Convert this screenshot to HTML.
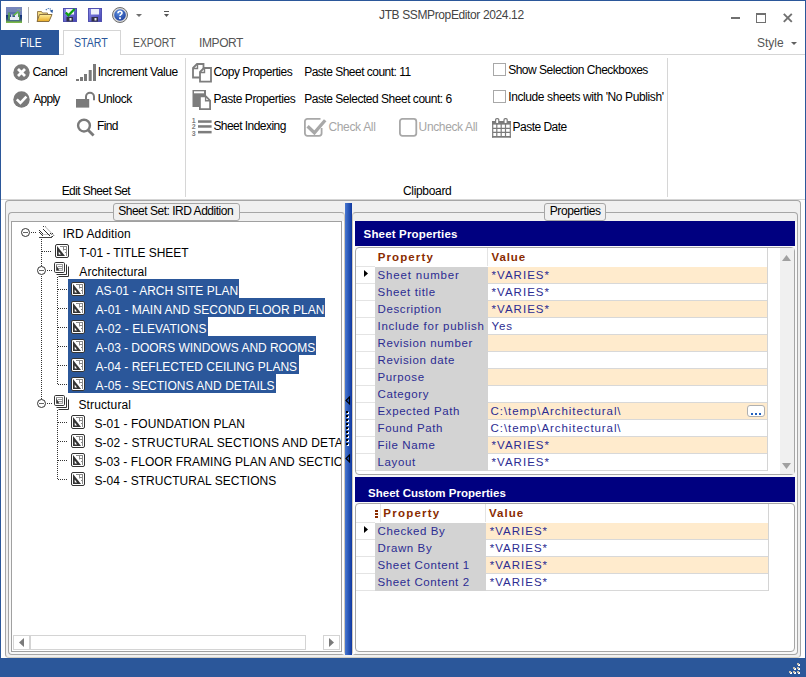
<!DOCTYPE html>
<html><head><meta charset="utf-8">
<style>
*{margin:0;padding:0;box-sizing:border-box}
html,body{width:806px;height:677px;overflow:hidden;background:#fff}
body{position:relative;font-family:"Liberation Sans",sans-serif;color:#000}
.a{position:absolute}
.t{position:absolute;white-space:pre;line-height:20px;font-size:12px}
svg{position:absolute;overflow:visible}
.hl{position:absolute;background:#2b579a;height:19px}
.row{position:absolute;height:16px}
</style></head><body>
<!-- window border -->
<div class="a" style="left:0;top:0;width:806px;height:1px;background:#2b579a"></div>
<div class="a" style="left:0;top:0;width:1px;height:677px;background:#2b579a"></div>
<div class="a" style="left:805px;top:0;width:1px;height:677px;background:#2b579a"></div>

<!-- quick access toolbar -->
<svg style="left:6px;top:7px" width="16" height="16" viewBox="0 0 16 16">
  <defs><linearGradient id="gapp" x1="0" y1="0" x2="0" y2="1">
    <stop offset="0" stop-color="#7888bb"/><stop offset="0.48" stop-color="#6f80b6"/><stop offset="0.52" stop-color="#12307a"/><stop offset="0.75" stop-color="#2a4a7a"/><stop offset="1" stop-color="#86c840"/></linearGradient></defs>
  <rect x="0" y="0" width="16" height="16" fill="url(#gapp)"/>
  <rect x="2.5" y="5" width="11" height="9" fill="#4a62a0" opacity="0.6"/>
  <path d="M3 5.5v7M13 5.5v7" stroke="#5cb040" stroke-width="1.4"/>
  <path d="M4 10h9v3H4z" fill="#e8ecf6"/>
  <path d="M9 10V8l3-2v4z" fill="#e8ecf6"/>
  <rect x="5" y="7.5" width="1.5" height="2.5" fill="#c8d0e8"/>
  <path d="M7.5 8.5L12.5 4.5" stroke="#68c040" stroke-width="1.6"/>
  <path d="M11.5 2.5q2-0.5 3.5 1.5" stroke="#90c080" stroke-width="0.9" fill="none" stroke-dasharray="1 0.6"/>
</svg>
<div class="a" style="left:28px;top:7px;width:1px;height:16px;background:#b0b0b0"></div>
<svg style="left:37px;top:8px" width="16" height="14" viewBox="0 0 16 14">
  <defs><linearGradient id="gfold" x1="0" y1="0" x2="0" y2="1"><stop offset="0" stop-color="#fff0a0"/><stop offset="1" stop-color="#e8a820"/></linearGradient></defs>
  <path d="M0.5 3.5h4l1 1.5h5v8h-10z" fill="#f6dc80" stroke="#9a8050" stroke-width="1"/>
  <path d="M2.5 6.5h12.5l-3 7h-12z" fill="url(#gfold)" stroke="#8a7040" stroke-width="1"/>
  <path d="M8.8 2.2Q11.5 -1 14.6 2" fill="none" stroke="#4070b0" stroke-width="1.1" stroke-dasharray="1.3 0.9"/>
  <path d="M12.6 2.6l3.4-0.8-0.6 3.4z" fill="#2858a0"/>
</svg>
<svg style="left:63px;top:8px" width="14" height="14" viewBox="0 0 14 14">
  <defs><linearGradient id="gflop" x1="0" y1="0" x2="1" y2="1"><stop offset="0" stop-color="#8a8ae8"/><stop offset="1" stop-color="#4444b4"/></linearGradient></defs>
  <rect x="0.5" y="0.5" width="13" height="13" fill="url(#gflop)" stroke="#5050b0"/>
  <rect x="3" y="1" width="8" height="5.5" fill="#eef0fa"/>
  <rect x="3.5" y="9" width="6.5" height="4.5" fill="#303048"/>
  <rect x="6.5" y="10" width="2" height="2.5" fill="#e8e8e8"/>
  <path d="M2.8 4.5l2.6 2.8 6.2-6.3" fill="none" stroke="#10a010" stroke-width="2.2"/>
</svg>
<svg style="left:88px;top:8px" width="14" height="14" viewBox="0 0 14 14">
  <rect x="0.5" y="0.5" width="13" height="13" fill="url(#gflop)" stroke="#5050b0"/>
  <rect x="3" y="1" width="8" height="5.5" fill="#eef0fa"/>
  <rect x="3.5" y="9" width="6.5" height="4.5" fill="#303048"/>
  <rect x="6.5" y="10" width="2" height="2.5" fill="#e8e8e8"/>
</svg>
<svg style="left:112px;top:7px" width="16" height="16" viewBox="0 0 16 16">
  <defs><radialGradient id="ghelp" cx="0.4" cy="0.3" r="0.8"><stop offset="0" stop-color="#5a8ee0"/><stop offset="1" stop-color="#1a3a98"/></radialGradient></defs>
  <circle cx="8" cy="8" r="7.5" fill="#d8d8d8" stroke="#707070" stroke-width="1"/>
  <circle cx="8" cy="8" r="5.8" fill="url(#ghelp)"/>
  <path d="M6 6.2q0-2 2-2t2 1.8q0 1-1.2 1.6q-0.8 0.4-0.8 1.4" fill="none" stroke="#fff" stroke-width="1.6"/>
  <rect x="7.1" y="10.3" width="1.8" height="1.8" fill="#fff"/>
</svg>
<svg style="left:136px;top:14px" width="6" height="3" viewBox="0 0 6 3"><path d="M0 0h6l-3 3z" fill="#707070"/></svg>
<svg style="left:164px;top:10px" width="5" height="8" viewBox="0 0 5 8"><rect x="0" y="1" width="5" height="1" fill="#555"/><path d="M0 4h5l-2.5 3z" fill="#555"/></svg>

<!-- window controls -->
<div class="a" style="left:731px;top:17px;width:9px;height:2px;background:#707070"></div>
<div class="a" style="left:756px;top:13px;width:10px;height:10px;border:1px solid #707070;border-top-width:2px"></div>
<svg style="left:783px;top:13px" width="10" height="10" viewBox="0 0 10 10"><path d="M0.8 0.8L8.8 8.8M8.8 0.8L0.8 8.8" stroke="#707070" stroke-width="1.9"/></svg>

<!-- tabs -->
<div class="a" style="left:1px;top:54px;width:804px;height:1px;background:#d5d5d5"></div>
<div class="a" style="left:0;top:30px;width:59px;height:25px;background:#2b579a"></div>
<div class="a" style="left:63px;top:30px;width:58px;height:25px;border:1px solid #d5d5d5;border-bottom:none;background:#fff"></div>
<svg style="left:791px;top:42px" width="6" height="3" viewBox="0 0 6 3"><path d="M0 0h6l-3 3z" fill="#606060"/></svg>

<!-- ribbon -->
<div class="a" style="left:185px;top:58px;width:1px;height:139px;background:#d6d6d6"></div>
<div class="a" style="left:667px;top:58px;width:1px;height:139px;background:#d6d6d6"></div>
<div class="a" style="left:1px;top:199px;width:804px;height:1px;background:#d5d5d5"></div>

<!-- Cancel -->
<svg style="left:13px;top:64px" width="17" height="17" viewBox="0 0 17 17">
  <circle cx="8.5" cy="8.5" r="8.2" fill="#7a7a7a"/>
  <path d="M5 5l7 7M12 5l-7 7" stroke="#fff" stroke-width="2.8"/>
</svg>
<!-- Apply -->
<svg style="left:13px;top:91px" width="17" height="17" viewBox="0 0 17 17">
  <circle cx="8.5" cy="8.5" r="8.2" fill="#7a7a7a"/>
  <path d="M3.8 8.4l3.6 3.6 6-6.4" fill="none" stroke="#fff" stroke-width="2.6"/>
</svg>
<!-- Increment -->
<svg style="left:76px;top:64px" width="21" height="17" viewBox="0 0 21 17">
  <rect x="0" y="15" width="3" height="2" fill="#7a7a7a"/>
  <rect x="4" y="13" width="3" height="4" fill="#7a7a7a"/>
  <rect x="8" y="10" width="3" height="7" fill="#7a7a7a"/>
  <rect x="12.7" y="6" width="3" height="11" fill="#7a7a7a"/>
  <rect x="17" y="0" width="3" height="17" fill="#7a7a7a"/>
</svg>
<!-- Unlock -->
<svg style="left:76px;top:92px" width="20" height="16" viewBox="0 0 20 16">
  <rect x="0" y="7" width="13.2" height="8.6" fill="#7a7a7a"/>
  <path d="M10 8V4.8a4 4 0 0 1 8 0V8.3" fill="none" stroke="#7a7a7a" stroke-width="2"/>
</svg>
<!-- Find -->
<svg style="left:76px;top:118px" width="19" height="19" viewBox="0 0 19 19">
  <circle cx="8" cy="7.6" r="5.9" fill="none" stroke="#7a7a7a" stroke-width="2.4"/>
  <path d="M11.8 11.8l5.8 5.8" stroke="#7a7a7a" stroke-width="2.8"/>
</svg>
<!-- Copy props -->
<svg style="left:192px;top:63px" width="20" height="20" viewBox="0 0 20 20">
  <path d="M1 5l4-4h6.5v13.5H1z" fill="#fff" stroke="#7d7d7d" stroke-width="1.8"/>
  <path d="M1 5.5h4.5V1" fill="none" stroke="#7d7d7d" stroke-width="1.4"/>
  <path d="M8 9l4-4h7v13.7H8z" fill="#fff" stroke="#7d7d7d" stroke-width="1.8"/>
  <path d="M8 9.5h4.5V5" fill="none" stroke="#7d7d7d" stroke-width="1.4"/>
</svg>
<!-- Paste props -->
<svg style="left:192px;top:90px" width="20" height="20" viewBox="0 0 20 20">
  <rect x="0.5" y="0" width="13.5" height="17" fill="#7d7d7d"/>
  <rect x="2" y="1.3" width="10" height="2" fill="#fff"/>
  <path d="M7.9 6.4h6l4.2 4.2v8.5H7.9z" fill="#fff" stroke="#7d7d7d" stroke-width="1.8"/>
  <path d="M13.6 6v4.7h4.7" fill="none" stroke="#7d7d7d" stroke-width="1.4"/>
</svg>
<!-- Sheet indexing -->
<svg style="left:192px;top:117px" width="20" height="20" viewBox="0 0 20 20">
  <text x="-0.2" y="5.6" font-family="Liberation Sans" font-size="7" font-weight="700" fill="#7d7d7d">1</text>
  <text x="-0.2" y="12" font-family="Liberation Sans" font-size="7" font-weight="700" fill="#7d7d7d">2</text>
  <text x="-0.2" y="19" font-family="Liberation Sans" font-size="7" font-weight="700" fill="#7d7d7d">3</text>
  <rect x="6" y="3.3" width="13.6" height="2.5" fill="#7d7d7d"/>
  <rect x="6" y="8.2" width="13.6" height="2.5" fill="#7d7d7d"/>
  <rect x="6" y="13.9" width="13.6" height="2.5" fill="#7d7d7d"/>
</svg>
<!-- Check all -->
<svg style="left:304px;top:118px" width="23" height="19" viewBox="0 0 23 19">
  <path d="M16.5 0.9H3.4a2.5 2.5 0 0 0-2.5 2.5v11.9a2.5 2.5 0 0 0 2.5 2.5h11.7a2.5 2.5 0 0 0 2.5-2.5V10" fill="none" stroke="#a8a8a8" stroke-width="1.8"/>
  <path d="M3.6 8.2l6.8 6.6 10.8-12.6" fill="none" stroke="#a8a8a8" stroke-width="3.3"/>
</svg>
<!-- Uncheck all -->
<svg style="left:399px;top:118px" width="18" height="19" viewBox="0 0 18 19">
  <rect x="0.9" y="0.9" width="16.4" height="16.9" rx="2.5" fill="none" stroke="#a8a8a8" stroke-width="1.8"/>
</svg>
<!-- checkboxes -->
<div class="a" style="left:493px;top:63px;width:13px;height:13px;border:1px solid #a8a8a8;background:#fff"></div>
<div class="a" style="left:493px;top:90px;width:13px;height:13px;border:1px solid #a8a8a8;background:#fff"></div>
<!-- calendar -->
<svg style="left:492px;top:118px" width="19" height="20" viewBox="0 0 19 20">
  <rect x="0.5" y="3" width="18" height="16.6" fill="#fff"/>
  <rect x="0" y="3" width="19" height="3.6" fill="#7a7a7a"/>
  <rect x="0" y="18" width="19" height="1.7" fill="#7a7a7a"/>
  <path d="M0.7 3v16.6M18.3 3v16.6M1 10.4h17M1 14.4h17M4.8 6v12M9.2 6v12M13.5 6v12" stroke="#7a7a7a" stroke-width="1.2"/>
  <rect x="3.6" y="0.6" width="3.2" height="5" rx="1.2" fill="#fff" stroke="#7a7a7a" stroke-width="1.2"/>
  <rect x="12" y="0.6" width="3.2" height="5" rx="1.2" fill="#fff" stroke="#7a7a7a" stroke-width="1.2"/>
</svg>

<!-- main panel -->
<div class="a" style="left:5px;top:200px;width:796px;height:458px;border:1px solid #a6a6a6;border-bottom-color:#d4cfc4;border-radius:4px;background:#f0f0f0"></div>
<!-- left group -->
<div class="a" style="left:8px;top:212px;width:337px;height:443px;border:1px solid #a6a6a6;border-right-color:#cfc8bc;border-radius:4px;background:linear-gradient(180deg,#f0f0f0 0 9px,#f8f8f8 9px)"></div>
<div class="a" style="left:342px;top:221px;width:2px;height:433px;background:#fff"></div>
<div class="a" style="left:113px;top:203px;width:127px;height:18px;border:1px solid #a6a6a6;border-radius:3px;background:#f0f0f0"></div>
<!-- tree -->
<div class="a" style="left:11px;top:221px;width:331px;height:431px;border:1px solid #a0a0a0;background:#fff"></div>
<div class="a" id="tree" style="left:0;top:0;width:341px;height:651px;overflow:hidden">
<div class="hl" style="left:68px;top:279px;width:171px"></div>
<div class="hl" style="left:68px;top:298px;width:257px"></div>
<div class="hl" style="left:68px;top:317px;width:140px"></div>
<div class="hl" style="left:68px;top:336px;width:248px"></div>
<div class="hl" style="left:68px;top:355px;width:231px"></div>
<div class="hl" style="left:68px;top:374px;width:208px"></div>
<svg style="left:21px;top:228px" width="9" height="9" viewBox="0 0 9 9">
<circle cx="4.5" cy="4.5" r="4" fill="#fff" stroke="#333" stroke-width="1"/>
<path d="M2 4.5h5" stroke="#666" stroke-width="1"/></svg>
<div class="a" style="left:31px;top:232px;width:5px;height:1px;background:repeating-linear-gradient(90deg,#333 0 1px,transparent 1px 2px)"></div>
<svg style="left:38px;top:225px" width="16" height="14" viewBox="0 0 16 14" shape-rendering="crispEdges"><rect x="3" y="9" width="9" height="1" fill="#c8c8c8"/><rect x="7" y="2" width="1" height="1" fill="#d8d8d8"/><rect x="8" y="2" width="1" height="1" fill="#d8d8d8"/><rect x="8" y="3" width="1" height="1" fill="#d8d8d8"/><rect x="9" y="3" width="1" height="1" fill="#d8d8d8"/><rect x="9" y="4" width="1" height="1" fill="#d8d8d8"/><rect x="10" y="4" width="1" height="1" fill="#d8d8d8"/><rect x="10" y="5" width="1" height="1" fill="#d8d8d8"/><rect x="11" y="5" width="1" height="1" fill="#d8d8d8"/><rect x="11" y="6" width="1" height="1" fill="#d8d8d8"/><rect x="12" y="6" width="1" height="1" fill="#d8d8d8"/><rect x="12" y="7" width="1" height="1" fill="#d8d8d8"/><rect x="13" y="7" width="1" height="1" fill="#d8d8d8"/><rect x="13" y="8" width="1" height="1" fill="#d8d8d8"/><rect x="14" y="8" width="1" height="1" fill="#d8d8d8"/><rect x="14" y="9" width="1" height="1" fill="#d8d8d8"/><rect x="15" y="9" width="1" height="1" fill="#d8d8d8"/><rect x="15" y="10" width="1" height="1" fill="#d8d8d8"/><rect x="16" y="10" width="1" height="1" fill="#d8d8d8"/><rect x="7" y="1" width="1" height="1" fill="#909090"/><rect x="13" y="9" width="1" height="1" fill="#909090"/><rect x="13" y="11" width="1" height="1" fill="#909090"/><rect x="15" y="10" width="1" height="1" fill="#909090"/><rect x="5" y="1" width="1" height="1" fill="#333"/><rect x="5" y="4" width="1" height="1" fill="#333"/><rect x="6" y="5" width="1" height="1" fill="#333"/><rect x="7" y="6" width="1" height="1" fill="#333"/><rect x="8" y="7" width="1" height="1" fill="#333"/><rect x="9" y="8" width="1" height="1" fill="#333"/><rect x="10" y="9" width="1" height="1" fill="#333"/><rect x="11" y="10" width="1" height="1" fill="#333"/><rect x="1" y="5" width="1" height="1" fill="#333"/><rect x="1" y="7" width="1" height="1" fill="#333"/><rect x="2" y="6" width="1" height="1" fill="#333"/><rect x="3" y="7" width="1" height="1" fill="#333"/><rect x="2" y="8" width="1" height="1" fill="#333"/><rect x="3" y="9" width="1" height="1" fill="#333"/><rect x="4" y="8" width="1" height="1" fill="#333"/><rect x="4" y="10" width="1" height="1" fill="#333"/><rect x="12" y="8" width="1" height="1" fill="#333"/><rect x="14" y="8" width="1" height="1" fill="#333"/><rect x="14" y="11" width="1" height="1" fill="#333"/><rect x="1" y="12" width="13" height="1" fill="#444"/></svg>
<div class="a" style="left:41px;top:239px;width:1px;height:27px;background:repeating-linear-gradient(180deg,#333 0 1px,transparent 1px 2px)"></div>
<div class="a" style="left:41px;top:276px;width:1px;height:123px;background:repeating-linear-gradient(180deg,#333 0 1px,transparent 1px 2px)"></div>
<div class="a" style="left:42px;top:251px;width:10px;height:1px;background:repeating-linear-gradient(90deg,#333 0 1px,transparent 1px 2px)"></div>
<svg style="left:55px;top:244px" width="14" height="14" viewBox="0 0 14 14">
<rect x="0.5" y="0.5" width="13" height="13" rx="1.5" fill="#fff" stroke="#333" stroke-width="1"/>
<path d="M2 2v10h8z" fill="#333"/><path d="M3.7 7.5v3h2.3z" fill="#fff"/>
<path d="M5 2.5h7M11.5 2.5v9.5M8.5 2.5v4M8 5.5h3.5M10 8.5h1.5" stroke="#8a8a8a" stroke-width="1" fill="none"/>
</svg>
<svg style="left:37px;top:266px" width="9" height="9" viewBox="0 0 9 9">
<circle cx="4.5" cy="4.5" r="4" fill="#fff" stroke="#333" stroke-width="1"/>
<path d="M2 4.5h5" stroke="#666" stroke-width="1"/></svg>
<div class="a" style="left:47px;top:270px;width:5px;height:1px;background:repeating-linear-gradient(90deg,#333 0 1px,transparent 1px 2px)"></div>
<svg style="left:54px;top:262px" width="15" height="15" viewBox="0 0 15 15">
<path d="M12.5 2.5V12.5H2.5M14.5 4.5V14.5H4.5" fill="none" stroke="#333" stroke-width="1"/>
<rect x="0.5" y="0.5" width="10" height="10" rx="1.2" fill="#fff" stroke="#333" stroke-width="1"/>
<rect x="2.5" y="2.5" width="6" height="5.8" fill="#fff" stroke="#9a9a9a" stroke-width="1"/>
<path d="M4 4.5h4.5M4 6.5h4.5" stroke="#9a9a9a" stroke-width="1"/>
<path d="M2.3 3v5.5h3z" fill="#333"/>
</svg>
<div class="a" style="left:58px;top:289px;width:10px;height:1px;background:repeating-linear-gradient(90deg,#333 0 1px,transparent 1px 2px)"></div>
<svg style="left:71px;top:282px" width="14" height="14" viewBox="0 0 14 14">
<rect x="0.5" y="0.5" width="13" height="13" rx="1.5" fill="#fff" stroke="#333" stroke-width="1"/>
<path d="M2 2v10h8z" fill="#333"/><path d="M3.7 7.5v3h2.3z" fill="#fff"/>
<path d="M5 2.5h7M11.5 2.5v9.5M8.5 2.5v4M8 5.5h3.5M10 8.5h1.5" stroke="#8a8a8a" stroke-width="1" fill="none"/>
</svg>
<div class="a" style="left:58px;top:308px;width:10px;height:1px;background:repeating-linear-gradient(90deg,#333 0 1px,transparent 1px 2px)"></div>
<svg style="left:71px;top:301px" width="14" height="14" viewBox="0 0 14 14">
<rect x="0.5" y="0.5" width="13" height="13" rx="1.5" fill="#fff" stroke="#333" stroke-width="1"/>
<path d="M2 2v10h8z" fill="#333"/><path d="M3.7 7.5v3h2.3z" fill="#fff"/>
<path d="M5 2.5h7M11.5 2.5v9.5M8.5 2.5v4M8 5.5h3.5M10 8.5h1.5" stroke="#8a8a8a" stroke-width="1" fill="none"/>
</svg>
<div class="a" style="left:58px;top:327px;width:10px;height:1px;background:repeating-linear-gradient(90deg,#333 0 1px,transparent 1px 2px)"></div>
<svg style="left:71px;top:320px" width="14" height="14" viewBox="0 0 14 14">
<rect x="0.5" y="0.5" width="13" height="13" rx="1.5" fill="#fff" stroke="#333" stroke-width="1"/>
<path d="M2 2v10h8z" fill="#333"/><path d="M3.7 7.5v3h2.3z" fill="#fff"/>
<path d="M5 2.5h7M11.5 2.5v9.5M8.5 2.5v4M8 5.5h3.5M10 8.5h1.5" stroke="#8a8a8a" stroke-width="1" fill="none"/>
</svg>
<div class="a" style="left:58px;top:346px;width:10px;height:1px;background:repeating-linear-gradient(90deg,#333 0 1px,transparent 1px 2px)"></div>
<svg style="left:71px;top:339px" width="14" height="14" viewBox="0 0 14 14">
<rect x="0.5" y="0.5" width="13" height="13" rx="1.5" fill="#fff" stroke="#333" stroke-width="1"/>
<path d="M2 2v10h8z" fill="#333"/><path d="M3.7 7.5v3h2.3z" fill="#fff"/>
<path d="M5 2.5h7M11.5 2.5v9.5M8.5 2.5v4M8 5.5h3.5M10 8.5h1.5" stroke="#8a8a8a" stroke-width="1" fill="none"/>
</svg>
<div class="a" style="left:58px;top:365px;width:10px;height:1px;background:repeating-linear-gradient(90deg,#333 0 1px,transparent 1px 2px)"></div>
<svg style="left:71px;top:358px" width="14" height="14" viewBox="0 0 14 14">
<rect x="0.5" y="0.5" width="13" height="13" rx="1.5" fill="#fff" stroke="#333" stroke-width="1"/>
<path d="M2 2v10h8z" fill="#333"/><path d="M3.7 7.5v3h2.3z" fill="#fff"/>
<path d="M5 2.5h7M11.5 2.5v9.5M8.5 2.5v4M8 5.5h3.5M10 8.5h1.5" stroke="#8a8a8a" stroke-width="1" fill="none"/>
</svg>
<div class="a" style="left:58px;top:384px;width:10px;height:1px;background:repeating-linear-gradient(90deg,#333 0 1px,transparent 1px 2px)"></div>
<svg style="left:71px;top:377px" width="14" height="14" viewBox="0 0 14 14">
<rect x="0.5" y="0.5" width="13" height="13" rx="1.5" fill="#fff" stroke="#333" stroke-width="1"/>
<path d="M2 2v10h8z" fill="#333"/><path d="M3.7 7.5v3h2.3z" fill="#fff"/>
<path d="M5 2.5h7M11.5 2.5v9.5M8.5 2.5v4M8 5.5h3.5M10 8.5h1.5" stroke="#8a8a8a" stroke-width="1" fill="none"/>
</svg>
<svg style="left:37px;top:399px" width="9" height="9" viewBox="0 0 9 9">
<circle cx="4.5" cy="4.5" r="4" fill="#fff" stroke="#333" stroke-width="1"/>
<path d="M2 4.5h5" stroke="#666" stroke-width="1"/></svg>
<div class="a" style="left:47px;top:403px;width:5px;height:1px;background:repeating-linear-gradient(90deg,#333 0 1px,transparent 1px 2px)"></div>
<svg style="left:54px;top:395px" width="15" height="15" viewBox="0 0 15 15">
<path d="M12.5 2.5V12.5H2.5M14.5 4.5V14.5H4.5" fill="none" stroke="#333" stroke-width="1"/>
<rect x="0.5" y="0.5" width="10" height="10" rx="1.2" fill="#fff" stroke="#333" stroke-width="1"/>
<rect x="2.5" y="2.5" width="6" height="5.8" fill="#fff" stroke="#9a9a9a" stroke-width="1"/>
<path d="M4 4.5h4.5M4 6.5h4.5" stroke="#9a9a9a" stroke-width="1"/>
<path d="M2.3 3v5.5h3z" fill="#333"/>
</svg>
<div class="a" style="left:58px;top:422px;width:10px;height:1px;background:repeating-linear-gradient(90deg,#333 0 1px,transparent 1px 2px)"></div>
<svg style="left:71px;top:415px" width="14" height="14" viewBox="0 0 14 14">
<rect x="0.5" y="0.5" width="13" height="13" rx="1.5" fill="#fff" stroke="#333" stroke-width="1"/>
<path d="M2 2v10h8z" fill="#333"/><path d="M3.7 7.5v3h2.3z" fill="#fff"/>
<path d="M5 2.5h7M11.5 2.5v9.5M8.5 2.5v4M8 5.5h3.5M10 8.5h1.5" stroke="#8a8a8a" stroke-width="1" fill="none"/>
</svg>
<div class="a" style="left:58px;top:441px;width:10px;height:1px;background:repeating-linear-gradient(90deg,#333 0 1px,transparent 1px 2px)"></div>
<svg style="left:71px;top:434px" width="14" height="14" viewBox="0 0 14 14">
<rect x="0.5" y="0.5" width="13" height="13" rx="1.5" fill="#fff" stroke="#333" stroke-width="1"/>
<path d="M2 2v10h8z" fill="#333"/><path d="M3.7 7.5v3h2.3z" fill="#fff"/>
<path d="M5 2.5h7M11.5 2.5v9.5M8.5 2.5v4M8 5.5h3.5M10 8.5h1.5" stroke="#8a8a8a" stroke-width="1" fill="none"/>
</svg>
<div class="a" style="left:58px;top:460px;width:10px;height:1px;background:repeating-linear-gradient(90deg,#333 0 1px,transparent 1px 2px)"></div>
<svg style="left:71px;top:453px" width="14" height="14" viewBox="0 0 14 14">
<rect x="0.5" y="0.5" width="13" height="13" rx="1.5" fill="#fff" stroke="#333" stroke-width="1"/>
<path d="M2 2v10h8z" fill="#333"/><path d="M3.7 7.5v3h2.3z" fill="#fff"/>
<path d="M5 2.5h7M11.5 2.5v9.5M8.5 2.5v4M8 5.5h3.5M10 8.5h1.5" stroke="#8a8a8a" stroke-width="1" fill="none"/>
</svg>
<div class="a" style="left:58px;top:479px;width:10px;height:1px;background:repeating-linear-gradient(90deg,#333 0 1px,transparent 1px 2px)"></div>
<svg style="left:71px;top:472px" width="14" height="14" viewBox="0 0 14 14">
<rect x="0.5" y="0.5" width="13" height="13" rx="1.5" fill="#fff" stroke="#333" stroke-width="1"/>
<path d="M2 2v10h8z" fill="#333"/><path d="M3.7 7.5v3h2.3z" fill="#fff"/>
<path d="M5 2.5h7M11.5 2.5v9.5M8.5 2.5v4M8 5.5h3.5M10 8.5h1.5" stroke="#8a8a8a" stroke-width="1" fill="none"/>
</svg>
<div class="a" style="left:57px;top:277px;width:1px;height:108px;background:repeating-linear-gradient(180deg,#333 0 1px,transparent 1px 2px)"></div>
<div class="a" style="left:57px;top:410px;width:1px;height:70px;background:repeating-linear-gradient(180deg,#333 0 1px,transparent 1px 2px)"></div>
<div class="t" style="left:62.70px;top:224.00px;font-size:12px;font-weight:400;color:#000;letter-spacing:0.118px;">IRD Addition</div>
<div class="t" style="left:79.30px;top:243.00px;font-size:12px;font-weight:400;color:#000;letter-spacing:-0.076px;">T-01 - TITLE SHEET</div>
<div class="t" style="left:79.30px;top:262.00px;font-size:12px;font-weight:400;color:#000;letter-spacing:0.083px;">Architectural</div>
<div class="t" style="left:95.60px;top:281.00px;font-size:12px;font-weight:400;color:#fff;letter-spacing:0.024px;">AS-01 - ARCH SITE PLAN</div>
<div class="t" style="left:95.60px;top:300.00px;font-size:12px;font-weight:400;color:#fff;letter-spacing:0.022px;">A-01 - MAIN AND SECOND FLOOR PLAN</div>
<div class="t" style="left:95.60px;top:319.00px;font-size:12px;font-weight:400;color:#fff;letter-spacing:0.075px;">A-02 - ELEVATIONS</div>
<div class="t" style="left:95.60px;top:338.00px;font-size:12px;font-weight:400;color:#fff;letter-spacing:-0.038px;">A-03 - DOORS WINDOWS AND ROOMS</div>
<div class="t" style="left:95.60px;top:357.00px;font-size:12px;font-weight:400;color:#fff;letter-spacing:0.003px;">A-04 - REFLECTED CEILING PLANS</div>
<div class="t" style="left:95.60px;top:376.00px;font-size:12px;font-weight:400;color:#fff;letter-spacing:0.042px;">A-05 - SECTIONS AND DETAILS</div>
<div class="t" style="left:78.40px;top:395.00px;font-size:12px;font-weight:400;color:#000;letter-spacing:0.144px;">Structural</div>
<div class="t" style="left:94.40px;top:414.00px;font-size:12px;font-weight:400;color:#000;letter-spacing:0.071px;">S-01 - FOUNDATION PLAN</div>
<div class="t" style="left:94.40px;top:433.00px;font-size:12px;font-weight:400;color:#000;letter-spacing:0.150px;">S-02 - STRUCTURAL SECTIONS AND DETAILS</div>
<div class="t" style="left:94.40px;top:452.00px;font-size:12px;font-weight:400;color:#000;letter-spacing:0.060px;">S-03 - FLOOR FRAMING PLAN AND SECTIONS</div>
<div class="t" style="left:94.40px;top:471.00px;font-size:12px;font-weight:400;color:#000;letter-spacing:0.040px;">S-04 - STRUCTURAL SECTIONS</div>
</div>
<!-- hscroll -->
<div class="a" style="left:13px;top:635px;width:17px;height:15px;border:1px solid #d4d4d4"></div>
<svg style="left:19px;top:638px" width="5" height="9" viewBox="0 0 5 9"><path d="M5 0v9L0 4.5z" fill="#7a7a7a"/></svg>
<div class="a" style="left:30px;top:635px;width:276px;height:15px;border:1px solid #d4d4d4"></div>
<div class="a" style="left:323px;top:635px;width:17px;height:15px;border:1px solid #d4d4d4"></div>
<svg style="left:329px;top:638px" width="5" height="9" viewBox="0 0 5 9"><path d="M0 0v9l5-4.5z" fill="#7a7a7a"/></svg>

<!-- splitter -->
<div class="a" style="left:345px;top:203px;width:7px;height:452px;background:linear-gradient(90deg,#4a78d0,#2a58b8 50%,#1038a0)"></div>
<svg style="left:345px;top:396px" width="6" height="9" viewBox="0 0 6 9"><path d="M4.5 1L1 4.5 4.5 8z" fill="#1a48b0" stroke="#000" stroke-width="1.1" stroke-linejoin="miter"/></svg>
<svg style="left:345px;top:454px" width="6" height="9" viewBox="0 0 6 9"><path d="M4.5 1L1 4.5 4.5 8z" fill="#1a48b0" stroke="#000" stroke-width="1.1" stroke-linejoin="miter"/></svg>
<div class="a" style="left:347px;top:412px;width:2px;height:34px;background:repeating-linear-gradient(180deg,#fff 0 2px,transparent 2px 4px)"></div>
<div class="a" style="left:346px;top:411px;width:2px;height:34px;background:repeating-linear-gradient(180deg,#000 0 2px,transparent 2px 4px)"></div>

<!-- right group -->
<div class="a" style="left:352px;top:212px;width:446px;height:443px;border:1px solid #a6a6a6;border-left-color:#cfc8bc;border-radius:4px;background:linear-gradient(180deg,#f0f0f0 0 9px,#f8f8f8 9px)"></div>
<div class="a" style="left:353px;top:221px;width:2px;height:433px;background:#fff"></div>
<div class="a" style="left:544px;top:203px;width:62px;height:18px;border:1px solid #a6a6a6;border-radius:3px;background:#f0f0f0"></div>
<div class="a" style="left:355px;top:221px;width:440px;height:25px;background:#000080"></div>
<div class="a" style="left:355px;top:477px;width:440px;height:25px;background:#000080"></div>
<!-- grid1 -->
<div class="a" style="left:355px;top:247px;width:440px;height:228px;border:1px solid #a6a6a6;border-radius:4px;background:#fff"></div>
<div class="a" style="left:356px;top:266px;width:19px;height:1px;background:#e4e4e4"></div>
<div class="a" style="left:487px;top:248px;width:1px;height:18px;background:#e4e4e4"></div>
<div class="a" style="left:375px;top:267px;width:113px;height:17px;background:#d3d3d3"></div>
<div class="a" style="left:488px;top:267px;width:279px;height:16px;background:#ffebcd"></div>
<div class="a" style="left:356px;top:283px;width:19px;height:1px;background:#e4e4e4"></div>
<div class="a" style="left:488px;top:283px;width:279px;height:1px;background:#d8d8d8"></div>
<div class="a" style="left:375px;top:284px;width:113px;height:17px;background:#d3d3d3"></div>
<div class="a" style="left:488px;top:284px;width:279px;height:16px;background:#fff"></div>
<div class="a" style="left:356px;top:300px;width:19px;height:1px;background:#e4e4e4"></div>
<div class="a" style="left:488px;top:300px;width:279px;height:1px;background:#d8d8d8"></div>
<div class="a" style="left:375px;top:301px;width:113px;height:17px;background:#d3d3d3"></div>
<div class="a" style="left:488px;top:301px;width:279px;height:16px;background:#ffebcd"></div>
<div class="a" style="left:356px;top:317px;width:19px;height:1px;background:#e4e4e4"></div>
<div class="a" style="left:488px;top:317px;width:279px;height:1px;background:#d8d8d8"></div>
<div class="a" style="left:375px;top:318px;width:113px;height:17px;background:#d3d3d3"></div>
<div class="a" style="left:488px;top:318px;width:279px;height:16px;background:#fff"></div>
<div class="a" style="left:356px;top:334px;width:19px;height:1px;background:#e4e4e4"></div>
<div class="a" style="left:488px;top:334px;width:279px;height:1px;background:#d8d8d8"></div>
<div class="a" style="left:375px;top:335px;width:113px;height:17px;background:#d3d3d3"></div>
<div class="a" style="left:488px;top:335px;width:279px;height:16px;background:#ffebcd"></div>
<div class="a" style="left:356px;top:351px;width:19px;height:1px;background:#e4e4e4"></div>
<div class="a" style="left:488px;top:351px;width:279px;height:1px;background:#d8d8d8"></div>
<div class="a" style="left:375px;top:352px;width:113px;height:17px;background:#d3d3d3"></div>
<div class="a" style="left:488px;top:352px;width:279px;height:16px;background:#fff"></div>
<div class="a" style="left:356px;top:368px;width:19px;height:1px;background:#e4e4e4"></div>
<div class="a" style="left:488px;top:368px;width:279px;height:1px;background:#d8d8d8"></div>
<div class="a" style="left:375px;top:369px;width:113px;height:17px;background:#d3d3d3"></div>
<div class="a" style="left:488px;top:369px;width:279px;height:16px;background:#ffebcd"></div>
<div class="a" style="left:356px;top:385px;width:19px;height:1px;background:#e4e4e4"></div>
<div class="a" style="left:488px;top:385px;width:279px;height:1px;background:#d8d8d8"></div>
<div class="a" style="left:375px;top:386px;width:113px;height:17px;background:#d3d3d3"></div>
<div class="a" style="left:488px;top:386px;width:279px;height:16px;background:#fff"></div>
<div class="a" style="left:356px;top:402px;width:19px;height:1px;background:#e4e4e4"></div>
<div class="a" style="left:488px;top:402px;width:279px;height:1px;background:#d8d8d8"></div>
<div class="a" style="left:375px;top:403px;width:113px;height:17px;background:#d3d3d3"></div>
<div class="a" style="left:488px;top:403px;width:279px;height:16px;background:#ffebcd"></div>
<div class="a" style="left:356px;top:419px;width:19px;height:1px;background:#e4e4e4"></div>
<div class="a" style="left:488px;top:419px;width:279px;height:1px;background:#d8d8d8"></div>
<div class="a" style="left:375px;top:420px;width:113px;height:17px;background:#d3d3d3"></div>
<div class="a" style="left:488px;top:420px;width:279px;height:16px;background:#fff"></div>
<div class="a" style="left:356px;top:436px;width:19px;height:1px;background:#e4e4e4"></div>
<div class="a" style="left:488px;top:436px;width:279px;height:1px;background:#d8d8d8"></div>
<div class="a" style="left:375px;top:437px;width:113px;height:17px;background:#d3d3d3"></div>
<div class="a" style="left:488px;top:437px;width:279px;height:16px;background:#ffebcd"></div>
<div class="a" style="left:356px;top:453px;width:19px;height:1px;background:#e4e4e4"></div>
<div class="a" style="left:488px;top:453px;width:279px;height:1px;background:#d8d8d8"></div>
<div class="a" style="left:375px;top:454px;width:113px;height:17px;background:#d3d3d3"></div>
<div class="a" style="left:488px;top:454px;width:279px;height:16px;background:#fff"></div>
<div class="a" style="left:356px;top:470px;width:19px;height:1px;background:#e4e4e4"></div>
<div class="a" style="left:488px;top:470px;width:279px;height:1px;background:#d8d8d8"></div>
<div class="a" style="left:767px;top:248px;width:1px;height:223px;background:#d4d4d4"></div>
<svg style="left:364px;top:270px" width="4" height="7" viewBox="0 0 4 7"><path d="M0 0v7l4-3.5z" fill="#000"/></svg>
<div class="a" style="left:780px;top:248px;width:14px;height:226px;background:#f0f0f0"></div>
<svg style="left:782px;top:255px" width="9" height="6" viewBox="0 0 9 6"><path d="M0 6h9L4.5 0z" fill="#a0a0a0"/></svg>
<svg style="left:782px;top:463px" width="9" height="6" viewBox="0 0 9 6"><path d="M0 0h9L4.5 6z" fill="#a0a0a0"/></svg>
<div class="a" style="left:747px;top:405px;width:18px;height:12px;border:1px solid #b0b0b0;border-radius:3px;background:#fff"></div>
<div class="a" style="left:751px;top:413px;width:10px;height:2px;background:repeating-linear-gradient(90deg,#2060c0 0 2px,transparent 2px 4px)"></div>
<!-- grid2 -->
<div class="a" style="left:355px;top:503px;width:440px;height:149px;border:1px solid #a6a6a6;border-radius:4px;background:#fff"></div>
<div class="a" style="left:356px;top:522px;width:19px;height:1px;background:#e4e4e4"></div>
<div class="a" style="left:485px;top:504px;width:1px;height:18px;background:#e4e4e4"></div>
<div class="a" style="left:380px;top:504px;width:1px;height:18px;background:#e4e4e4"></div>
<div class="a" style="left:375px;top:510px;width:3px;height:1.5px;background:#8a2c00"></div>
<div class="a" style="left:375px;top:513px;width:3px;height:1.5px;background:#8a2c00"></div>
<div class="a" style="left:375px;top:516px;width:3px;height:1.5px;background:#8a2c00"></div>
<div class="a" style="left:375px;top:523px;width:111px;height:17px;background:#d3d3d3"></div>
<div class="a" style="left:486px;top:523px;width:282px;height:16px;background:#ffebcd"></div>
<div class="a" style="left:356px;top:539px;width:19px;height:1px;background:#e4e4e4"></div>
<div class="a" style="left:486px;top:539px;width:282px;height:1px;background:#d8d8d8"></div>
<div class="a" style="left:375px;top:540px;width:111px;height:17px;background:#d3d3d3"></div>
<div class="a" style="left:486px;top:540px;width:282px;height:16px;background:#fff"></div>
<div class="a" style="left:356px;top:556px;width:19px;height:1px;background:#e4e4e4"></div>
<div class="a" style="left:486px;top:556px;width:282px;height:1px;background:#d8d8d8"></div>
<div class="a" style="left:375px;top:557px;width:111px;height:17px;background:#d3d3d3"></div>
<div class="a" style="left:486px;top:557px;width:282px;height:16px;background:#ffebcd"></div>
<div class="a" style="left:356px;top:573px;width:19px;height:1px;background:#e4e4e4"></div>
<div class="a" style="left:486px;top:573px;width:282px;height:1px;background:#d8d8d8"></div>
<div class="a" style="left:375px;top:574px;width:111px;height:17px;background:#d3d3d3"></div>
<div class="a" style="left:486px;top:574px;width:282px;height:16px;background:#fff"></div>
<div class="a" style="left:356px;top:590px;width:19px;height:1px;background:#e4e4e4"></div>
<div class="a" style="left:486px;top:590px;width:282px;height:1px;background:#d8d8d8"></div>
<div class="a" style="left:768px;top:504px;width:1px;height:87px;background:#d4d4d4"></div>
<svg style="left:364px;top:526px" width="4" height="7" viewBox="0 0 4 7"><path d="M0 0v7l4-3.5z" fill="#000"/></svg>

<!-- status bar -->
<div class="a" style="left:0;top:658px;width:806px;height:19px;background:#2b579a"></div>
<svg style="left:789px;top:663px" width="12" height="12" viewBox="0 0 12 12" shape-rendering="crispEdges"><rect x="9" y="1" width="2" height="2" fill="#fff"/><rect x="5" y="5" width="2" height="2" fill="#fff"/><rect x="9" y="5" width="2" height="2" fill="#fff"/><rect x="1" y="9" width="2" height="2" fill="#fff"/><rect x="5" y="9" width="2" height="2" fill="#fff"/><rect x="9" y="9" width="2" height="2" fill="#fff"/><rect x="8" y="0" width="2" height="2" fill="#c8c0b0"/><rect x="4" y="4" width="2" height="2" fill="#c8c0b0"/><rect x="8" y="4" width="2" height="2" fill="#c8c0b0"/><rect x="0" y="8" width="2" height="2" fill="#c8c0b0"/><rect x="4" y="8" width="2" height="2" fill="#c8c0b0"/><rect x="8" y="8" width="2" height="2" fill="#c8c0b0"/></svg>

<div class="t" style="left:379.00px;top:5.00px;font-size:12px;font-weight:400;color:#444;letter-spacing:-0.375px;">JTB SSMPropEditor 2024.12</div>
<div class="t" style="left:19.95px;top:32.70px;font-size:12px;font-weight:400;color:#fff;letter-spacing:0.000px;transform-origin:0 0;transform:scaleX(0.8500);">FILE</div>
<div class="t" style="left:74.12px;top:33.00px;font-size:12px;font-weight:400;color:#2b579a;letter-spacing:0.000px;transform-origin:0 0;transform:scaleX(0.8838);">START</div>
<div class="t" style="left:132.64px;top:33.00px;font-size:12px;font-weight:400;color:#555;letter-spacing:0.000px;transform-origin:0 0;transform:scaleX(0.8646);">EXPORT</div>
<div class="t" style="left:199.00px;top:33.00px;font-size:12px;font-weight:400;color:#555;letter-spacing:-0.400px;">IMPORT</div>
<div class="t" style="left:757.00px;top:33.00px;font-size:12px;font-weight:400;color:#555;letter-spacing:0.000px;">Style</div>
<div class="t" style="left:32.50px;top:62.00px;font-size:12px;font-weight:400;color:#000;letter-spacing:-0.460px;">Cancel</div>
<div class="t" style="left:33.30px;top:89.00px;font-size:12px;font-weight:400;color:#000;letter-spacing:-0.750px;">Apply</div>
<div class="t" style="left:97.70px;top:62.00px;font-size:12px;font-weight:400;color:#000;letter-spacing:-0.429px;">Increment Value</div>
<div class="t" style="left:97.70px;top:89.00px;font-size:12px;font-weight:400;color:#000;letter-spacing:-0.420px;">Unlock</div>
<div class="t" style="left:97.00px;top:116.00px;font-size:12px;font-weight:400;color:#000;letter-spacing:-0.667px;">Find</div>
<div class="t" style="left:61.70px;top:180.50px;font-size:12px;font-weight:400;color:#000;letter-spacing:-0.592px;">Edit Sheet Set</div>
<div class="t" style="left:213.40px;top:62.00px;font-size:12px;font-weight:400;color:#000;letter-spacing:-0.479px;">Copy Properties</div>
<div class="t" style="left:213.40px;top:89.00px;font-size:12px;font-weight:400;color:#000;letter-spacing:-0.427px;">Paste Properties</div>
<div class="t" style="left:213.40px;top:116.00px;font-size:12px;font-weight:400;color:#000;letter-spacing:-0.546px;">Sheet Indexing</div>
<div class="t" style="left:304.20px;top:62.00px;font-size:12px;font-weight:400;color:#000;letter-spacing:-0.510px;">Paste Sheet count: 11</div>
<div class="t" style="left:304.20px;top:89.00px;font-size:12px;font-weight:400;color:#000;letter-spacing:-0.479px;">Paste Selected Sheet count: 6</div>
<div class="t" style="left:328.40px;top:117.00px;font-size:12px;font-weight:400;color:#a6a6a6;letter-spacing:-0.325px;">Check All</div>
<div class="t" style="left:418.60px;top:117.00px;font-size:12px;font-weight:400;color:#a6a6a6;letter-spacing:-0.360px;">Uncheck All</div>
<div class="t" style="left:508.20px;top:60.00px;font-size:12px;font-weight:400;color:#000;letter-spacing:-0.496px;">Show Selection Checkboxes</div>
<div class="t" style="left:508.20px;top:87.00px;font-size:12px;font-weight:400;color:#000;letter-spacing:-0.394px;">Include sheets with 'No Publish'</div>
<div class="t" style="left:512.60px;top:116.50px;font-size:12px;font-weight:400;color:#000;letter-spacing:-0.533px;">Paste Date</div>
<div class="t" style="left:403.00px;top:180.50px;font-size:12px;font-weight:400;color:#000;letter-spacing:-0.325px;">Clipboard</div>
<div class="t" style="left:118.20px;top:200.50px;font-size:12px;font-weight:400;color:#000;letter-spacing:-0.486px;">Sheet Set: IRD Addition</div>
<div class="t" style="left:549.70px;top:200.50px;font-size:12px;font-weight:400;color:#000;letter-spacing:-0.378px;">Properties</div>
<div class="t" style="left:363.60px;top:224.00px;font-size:11.5px;font-weight:700;color:#fff;letter-spacing:0.160px;">Sheet Properties</div>
<div class="t" style="left:377.70px;top:247.00px;font-size:11.5px;font-weight:700;color:#8a2c00;letter-spacing:1.114px;">Property</div>
<div class="t" style="left:491.60px;top:247.00px;font-size:11.5px;font-weight:700;color:#8a2c00;letter-spacing:0.875px;">Value</div>
<div class="t" style="left:368.00px;top:482.60px;font-size:11.5px;font-weight:700;color:#fff;letter-spacing:0.023px;">Sheet Custom Properties</div>
<div class="t" style="left:383.30px;top:503.00px;font-size:11.5px;font-weight:700;color:#8a2c00;letter-spacing:1.229px;">Property</div>
<div class="t" style="left:489.00px;top:503.00px;font-size:11.5px;font-weight:700;color:#8a2c00;letter-spacing:1.050px;">Value</div>
<div class="t" style="left:377.60px;top:265.00px;font-size:11.5px;font-weight:400;color:#2c2c92;letter-spacing:0.818px;">Sheet number</div>
<div class="t" style="left:377.60px;top:282.00px;font-size:11.5px;font-weight:400;color:#2c2c92;letter-spacing:0.640px;">Sheet title</div>
<div class="t" style="left:377.60px;top:299.00px;font-size:11.5px;font-weight:400;color:#2c2c92;letter-spacing:0.600px;">Description</div>
<div class="t" style="left:377.60px;top:316.00px;font-size:11.5px;font-weight:400;color:#2c2c92;letter-spacing:0.717px;">Include for publish</div>
<div class="t" style="left:377.60px;top:333.00px;font-size:11.5px;font-weight:400;color:#2c2c92;letter-spacing:0.600px;">Revision number</div>
<div class="t" style="left:377.60px;top:350.00px;font-size:11.5px;font-weight:400;color:#2c2c92;letter-spacing:0.600px;">Revision date</div>
<div class="t" style="left:377.60px;top:367.00px;font-size:11.5px;font-weight:400;color:#2c2c92;letter-spacing:0.600px;">Purpose</div>
<div class="t" style="left:377.60px;top:384.00px;font-size:11.5px;font-weight:400;color:#2c2c92;letter-spacing:0.600px;">Category</div>
<div class="t" style="left:377.60px;top:401.00px;font-size:11.5px;font-weight:400;color:#2c2c92;letter-spacing:0.575px;">Expected Path</div>
<div class="t" style="left:377.60px;top:418.00px;font-size:11.5px;font-weight:400;color:#2c2c92;letter-spacing:0.600px;">Found Path</div>
<div class="t" style="left:377.60px;top:435.00px;font-size:11.5px;font-weight:400;color:#2c2c92;letter-spacing:0.600px;">File Name</div>
<div class="t" style="left:377.60px;top:452.00px;font-size:11.5px;font-weight:400;color:#2c2c92;letter-spacing:0.600px;">Layout</div>
<div class="t" style="left:491.60px;top:265.00px;font-size:11.5px;font-weight:400;color:#2c2c92;letter-spacing:1.014px;">*VARIES*</div>
<div class="t" style="left:491.60px;top:282.00px;font-size:11.5px;font-weight:400;color:#2c2c92;letter-spacing:1.014px;">*VARIES*</div>
<div class="t" style="left:491.60px;top:299.00px;font-size:11.5px;font-weight:400;color:#2c2c92;letter-spacing:1.014px;">*VARIES*</div>
<div class="t" style="left:491.60px;top:316.00px;font-size:11.5px;font-weight:400;color:#2c2c92;letter-spacing:0.800px;">Yes</div>
<div class="t" style="left:490.60px;top:401.00px;font-size:11.5px;font-weight:400;color:#2c2c92;letter-spacing:0.924px;">C:\temp\Architectural\</div>
<div class="t" style="left:490.60px;top:418.00px;font-size:11.5px;font-weight:400;color:#2c2c92;letter-spacing:0.924px;">C:\temp\Architectural\</div>
<div class="t" style="left:491.60px;top:435.00px;font-size:11.5px;font-weight:400;color:#2c2c92;letter-spacing:1.014px;">*VARIES*</div>
<div class="t" style="left:491.60px;top:452.00px;font-size:11.5px;font-weight:400;color:#2c2c92;letter-spacing:1.014px;">*VARIES*</div>
<div class="t" style="left:377.60px;top:521.00px;font-size:11.5px;font-weight:400;color:#2c2c92;letter-spacing:0.578px;">Checked By</div>
<div class="t" style="left:489.70px;top:521.00px;font-size:11.5px;font-weight:400;color:#2c2c92;letter-spacing:1.014px;">*VARIES*</div>
<div class="t" style="left:377.60px;top:538.00px;font-size:11.5px;font-weight:400;color:#2c2c92;letter-spacing:0.600px;">Drawn By</div>
<div class="t" style="left:489.70px;top:538.00px;font-size:11.5px;font-weight:400;color:#2c2c92;letter-spacing:1.014px;">*VARIES*</div>
<div class="t" style="left:377.60px;top:555.00px;font-size:11.5px;font-weight:400;color:#2c2c92;letter-spacing:0.607px;">Sheet Content 1</div>
<div class="t" style="left:489.70px;top:555.00px;font-size:11.5px;font-weight:400;color:#2c2c92;letter-spacing:1.014px;">*VARIES*</div>
<div class="t" style="left:377.60px;top:572.00px;font-size:11.5px;font-weight:400;color:#2c2c92;letter-spacing:0.600px;">Sheet Content 2</div>
<div class="t" style="left:489.70px;top:572.00px;font-size:11.5px;font-weight:400;color:#2c2c92;letter-spacing:1.014px;">*VARIES*</div>
</body></html>
